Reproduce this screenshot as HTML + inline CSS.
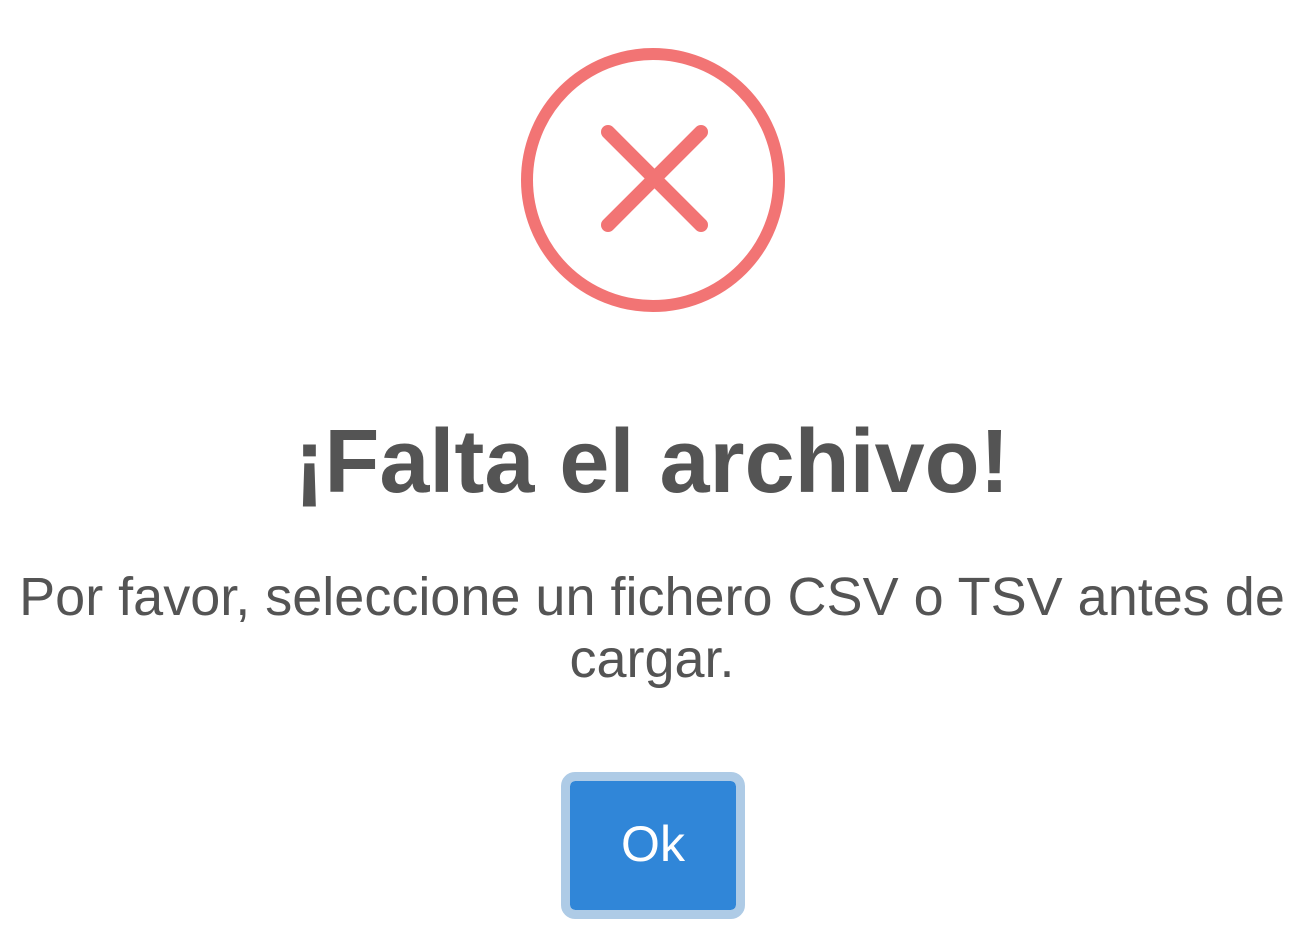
<!DOCTYPE html>
<html><head><meta charset="utf-8"><style>
html,body{margin:0;padding:0;background:#fff;width:1304px;height:931px;overflow:hidden;font-family:"Liberation Sans",sans-serif;color:#545454}
svg{position:absolute;left:0;top:0}
.t{position:absolute;left:0;width:1304px;text-align:center}
#h{top:412px;font-size:90px;font-weight:bold;line-height:100px}
#p{top:566px;font-size:54px;line-height:62px}
#b{position:absolute;left:561px;top:772px;width:166px;height:129px;border:9px solid #aecbe6;border-radius:14px;background:#3086d8;background-clip:padding-box}
#b span{position:absolute;left:0;right:0;top:33px;text-align:center;color:#fff;font-size:50px;line-height:60px}
</style></head><body>
<svg width="1304" height="931"><circle cx="653" cy="180" r="126" fill="none" stroke="#f27474" stroke-width="12"/>
<g stroke="#f27474" stroke-width="14" stroke-linecap="round"><line x1="608" y1="132" x2="701" y2="225"/><line x1="701" y1="132" x2="608" y2="225"/></g></svg>
<div class="t" id="h">¡Falta el archivo!</div>
<div class="t" id="p">Por favor, seleccione un fichero CSV o TSV antes de<br>cargar.</div>
<div id="b"><span>Ok</span></div>
</body></html>
